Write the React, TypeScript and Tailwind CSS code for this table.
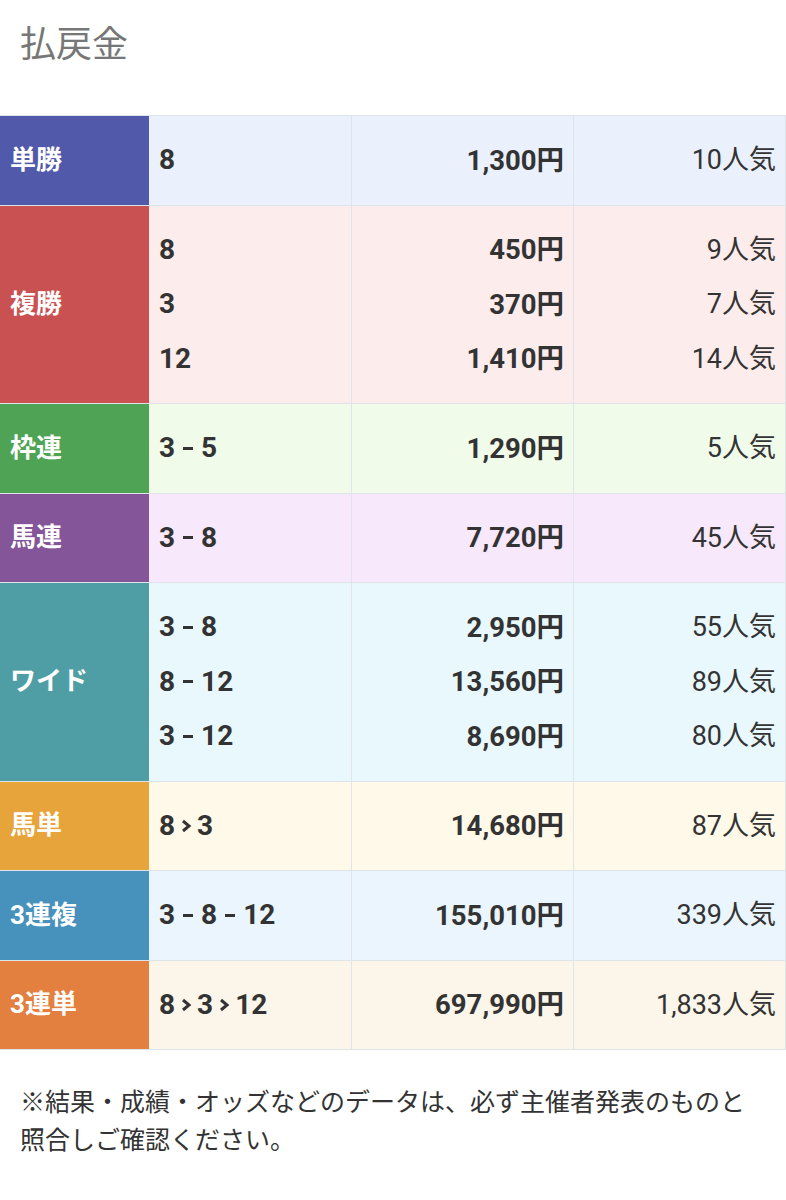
const font = { fontFamily: "Roboto, 'Noto Sans CJK JP', sans-serif" };

type Row = {
  label: string;
  labelBg: string;
  rowBg: string;
  lines: { combo: string; pay: string; pop: string }[];
};

const rows: Row[] = [
  { label: "単勝", labelBg: "bg-[#5159aa]", rowBg: "bg-[#eaf1fd]", lines: [{ combo: "8", pay: "1,300円", pop: "10人気" }] },
  {
    label: "複勝",
    labelBg: "bg-[#c95152]",
    rowBg: "bg-[#fdecec]",
    lines: [
      { combo: "8", pay: "450円", pop: "9人気" },
      { combo: "3", pay: "370円", pop: "7人気" },
      { combo: "12", pay: "1,410円", pop: "14人気" },
    ],
  },
  { label: "枠連", labelBg: "bg-[#4fa355]", rowBg: "bg-[#f0fbea]", lines: [{ combo: "3-5", pay: "1,290円", pop: "5人気" }] },
  { label: "馬連", labelBg: "bg-[#845598]", rowBg: "bg-[#f8e8fc]", lines: [{ combo: "3-8", pay: "7,720円", pop: "45人気" }] },
  {
    label: "ワイド",
    labelBg: "bg-[#4f9ea5]",
    rowBg: "bg-[#e9f8fd]",
    lines: [
      { combo: "3-8", pay: "2,950円", pop: "55人気" },
      { combo: "8-12", pay: "13,560円", pop: "89人気" },
      { combo: "3-12", pay: "8,690円", pop: "80人気" },
    ],
  },
  { label: "馬単", labelBg: "bg-[#e6a43b]", rowBg: "bg-[#fef9e8]", lines: [{ combo: "8>3", pay: "14,680円", pop: "87人気" }] },
  { label: "3連複", labelBg: "bg-[#4791bd]", rowBg: "bg-[#eaf5fd]", lines: [{ combo: "3-8-12", pay: "155,010円", pop: "339人気" }] },
  { label: "3連単", labelBg: "bg-[#e37f3f]", rowBg: "bg-[#fcf6ea]", lines: [{ combo: "8>3>12", pay: "697,990円", pop: "1,833人気" }] },
];

function Combo({ text }: { text: string }) {
  const parts = text.split(/([->])/);
  return (
    <span className="inline-flex items-center">
      {parts.map((p, i) =>
        p === "-" ? (
          <span key={i} className="mx-[8px] inline-block h-[3px] w-[10px] bg-[#333]" />
        ) : p === ">" ? (
          <svg key={i} width="20" height="14" viewBox="0 0 20 14" className="mx-[1px]">
            <path d="M7 2 L13 7 L7 12" stroke="#333" strokeWidth="3" fill="none" />
          </svg>
        ) : (
          <span key={i}>{p}</span>
        )
      )}
    </span>
  );
}

export default function App() {
  return (
    <div className="w-[786px] min-h-[1200px] bg-white text-[#333]" style={font}>
      <h1 className="px-[20px] pt-[20px] pb-[30px] text-[36px] font-normal leading-[50px] text-[#777]">払戻金</h1>
      <div className="mt-[15px] border-t border-b border-r border-[#dfe3ea]">
        {rows.map((r, i) => (
          <div key={i} className={`flex ${i > 0 ? "border-t border-[#dfe3ea]" : ""}`}>
            <div className={`w-[149px] shrink-0 flex items-center px-[10px] text-[26px] font-bold text-white ${r.labelBg}`}>
              {r.label}
            </div>
            <div className={`flex-1 flex ${r.rowBg}`}>
              <div className="w-[203px] border-r border-[#dfe3ea] flex flex-col justify-center py-[17px] px-[10px] text-[28px] font-bold">
                {r.lines.map((l, j) => (
                  <div key={j} className="h-[54.5px] flex items-center">
                    <Combo text={l.combo} />
                  </div>
                ))}
              </div>
              <div className="w-[222px] border-r border-[#dfe3ea] flex flex-col justify-center py-[17px] px-[9px] text-[27.5px] font-bold">
                {r.lines.map((l, j) => (
                  <div key={j} className="h-[54.5px] flex items-center justify-end">
                    {l.pay}
                  </div>
                ))}
              </div>
              <div className="flex-1 flex flex-col justify-center py-[17px] px-[9px] text-[27px]">
                {r.lines.map((l, j) => (
                  <div key={j} className="h-[54.5px] flex items-center justify-end">
                    {l.pop}
                  </div>
                ))}
              </div>
            </div>
          </div>
        ))}
      </div>
      <p className="pl-[20px] pr-[32px] pt-[34px] text-[25px] leading-[38px] text-[#333]">
        ※結果・成績・オッズなどのデータは、必ず主催者発表のものと照合しご確認ください。
      </p>
    </div>
  );
}
